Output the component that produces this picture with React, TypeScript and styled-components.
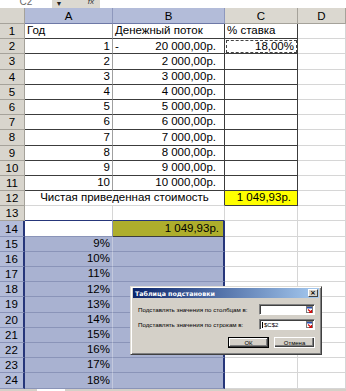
import React from 'react';
import styled, { createGlobalStyle } from 'styled-components';

const GlobalStyle = createGlobalStyle`
  *, *::before, *::after { box-sizing: border-box; }
  html, body { margin: 0; padding: 0; background: #fff; }
  body { font-family: "Liberation Sans", Arial, sans-serif; overflow: hidden; }
`;

const GRID = '#d6d6d6';
const INK = '#3c3c3c';
const SEL_FILL = '#a9b2d1';
const SEL_LINE = '#8a94b8';
const SEL_EDGE = '#26367a';

const Screen = styled.div`
  position: relative;
  width: 346px;
  height: 391px;
  overflow: hidden;
  display: flex;
  flex-direction: column;
  background: #fff;
`;

const FormulaStrip = styled.div`
  height: 8px;
  display: flex;
  overflow: hidden;
  background: #fff;
  font-size: 10px;
  color: #666;
`;

const NameBox = styled.div`
  width: 52px;
  display: flex;
  align-items: flex-end;
  justify-content: center;
  line-height: 13px;
`;

const DropButton = styled.div`
  width: 14px;
  display: flex;
  align-items: flex-end;
  justify-content: center;
  background: #dcd9d1;
  font-size: 7px;
  color: #222;
  padding-bottom: 1px;
`;

const FxArea = styled.div`
  width: 34px;
  display: flex;
  align-items: flex-end;
  justify-content: flex-end;
  padding-right: 6px;
  background: #dcd9d1;
  font-style: italic;
  font-size: 8px;
  line-height: 12px;
  color: #333;
`;

const Sheet = styled.div`
  display: grid;
  grid-template-columns: 25px 88px 112px 73px 1fr;
  grid-template-rows: 16px repeat(24, 15.2px);
  font-size: 11.5px;
  color: #000;
`;

const Corner = styled.div`
  background: #d8d5cd;
  border-right: 1px solid #a5a29a;
  border-bottom: 1px solid #a5a29a;
`;

const ColHead = styled.div<{ $selected?: boolean }>`
  display: flex;
  align-items: center;
  justify-content: center;
  background: ${(p) => (p.$selected ? '#b3bcd9' : '#dbd8d0')};
  border-right: 1px solid ${(p) => (p.$selected ? '#8e98bd' : '#a5a29a')};
  border-bottom: 1px solid ${(p) => (p.$selected ? '#6d78a6' : '#a5a29a')};
`;

const RowHead = styled.div<{ $selected?: boolean }>`
  display: flex;
  align-items: center;
  justify-content: center;
  background: ${(p) => (p.$selected ? '#b3bcd9' : '#d8d5cd')};
  border-right: ${(p) => (p.$selected ? `2px solid ${SEL_EDGE}` : '1px solid #a5a29a')};
  border-bottom: 1px solid ${(p) => (p.$selected ? SEL_LINE : '#a5a29a')};
`;

const Cell = styled.div<{
  $align?: 'left' | 'right' | 'center' | 'split';
  $fill?: string;
  $rb?: string;
  $rw?: number;
  $bb?: string;
  $pr?: number;
  $span?: number;
}>`
  display: flex;
  align-items: center;
  justify-content: ${(p) =>
    p.$align === 'right'
      ? 'flex-end'
      : p.$align === 'center'
        ? 'center'
        : p.$align === 'split'
          ? 'space-between'
          : 'flex-start'};
  padding: 0 ${(p) => p.$pr ?? 2}px 0 2px;
  background: ${(p) => p.$fill ?? '#fff'};
  border-right: ${(p) => p.$rw ?? 1}px solid ${(p) => p.$rb ?? GRID};
  border-bottom: 1px solid ${(p) => p.$bb ?? GRID};
  grid-column: ${(p) => (p.$span ? `span ${p.$span}` : 'auto')};
  white-space: nowrap;
  line-height: 1;
`;

const CopyCell = styled(Cell)`
  outline: 1px dashed #444;
  outline-offset: -2px;
`;

const BottomStrip = styled.div`
  flex: 1;
  display: flex;
  background: #d4d0c8;
`;

const SheetTab = styled.div`
  margin-left: 37px;
  width: 28px;
  background: #fff;
`;

const Dialog = styled.div`
  position: absolute;
  left: 130px;
  top: 286px;
  width: 192px;
  height: 69px;
  display: flex;
  flex-direction: column;
  background: #d4d0c8;
  border: 1px solid;
  border-color: #dedbd4 #404040 #404040 #dedbd4;
  box-shadow: inset 1px 1px #fff, inset -1px -1px #808080;
  padding: 1px 2px 2px 2px;
  font-family: "Liberation Sans", Arial, sans-serif;
`;

const TitleBar = styled.div`
  height: 10px;
  display: flex;
  align-items: center;
  justify-content: space-between;
  padding: 0 1px 0 2px;
  background: linear-gradient(to right, #0a246a, #a6caf0);
  color: #fff;
  font-family: "DejaVu Sans", sans-serif;
  font-weight: bold;
  font-size: 6.3px;
`;

const CloseButton = styled.div`
  width: 10px;
  height: 8px;
  display: flex;
  align-items: center;
  justify-content: center;
  background: #d4d0c8;
  border: 1px solid;
  border-color: #fff #404040 #404040 #fff;
  color: #000;
  font-size: 7px;
  line-height: 1;
`;

const DialogBody = styled.div`
  flex: 1;
  display: flex;
  flex-direction: column;
  padding: 6px 4px 4px 5px;
  font-size: 6.2px;
  color: #000;
`;

const FieldRow = styled.div`
  display: flex;
  align-items: center;
  justify-content: space-between;
  height: 11px;
  margin-bottom: 4px;
`;

const FieldLabel = styled.span`
  white-space: nowrap;
`;

const RefInput = styled.div`
  flex-shrink: 0;
  width: 56px;
  height: 11px;
  display: flex;
  align-items: center;
  justify-content: space-between;
  padding: 0 1px 0 2px;
  background: #fff;
  border: 1px solid;
  border-color: #808080 #fff #fff #808080;
  box-shadow: inset 1px 1px #404040;
  font-size: 6px;
`;

const Caret = styled.span`
  border-left: 1px solid #000;
  padding-left: 1px;
`;

const ButtonRow = styled.div`
  display: flex;
  justify-content: flex-end;
  gap: 5px;
  margin-top: 3px;
`;

const DialogButton = styled.div<{ $default?: boolean }>`
  width: 41px;
  height: 11px;
  display: flex;
  align-items: center;
  justify-content: center;
  background: #d4d0c8;
  border: 1px solid ${(p) => (p.$default ? '#000' : '#fff')};
  box-shadow: ${(p) =>
    p.$default
      ? 'inset -1px -1px #404040, inset 1px 1px #fff, inset -2px -2px #808080'
      : 'inset -1px -1px #404040, inset -2px -2px #808080'};
  font-size: 6px;
`;

const RefIcon = () => (
  <svg width="7" height="7" viewBox="0 0 7 7">
    <rect x="0.5" y="0.5" width="6" height="6" fill="#fff" stroke="#7a7a7a" strokeWidth="1" />
    <rect x="1" y="1" width="5" height="1.5" fill="#2a4fb0" />
    <path d="M2 3.5 L5.5 6.5 M5.5 4 V6.5 H3" stroke="#d01010" strokeWidth="1.2" fill="none" />
  </svg>
);

const rows = [2, 3, 4, 5, 6, 7, 8, 9, 10];
const rates = [9, 10, 11, 12, 13, 14, 15, 16, 17, 18];

export default function App() {
  return (
    <Screen>
      <GlobalStyle />
      <FormulaStrip>
        <NameBox>C2</NameBox>
        <DropButton>▼</DropButton>
        <FxArea>fx</FxArea>
      </FormulaStrip>

      <Sheet>
        <Corner />
        <ColHead $selected>A</ColHead>
        <ColHead $selected>B</ColHead>
        <ColHead>C</ColHead>
        <ColHead>D</ColHead>

        <RowHead>1</RowHead>
        <Cell $rb="#a0a0a0" $bb={INK}>Год</Cell>
        <Cell $rb={INK} $bb={INK}>Денежный поток</Cell>
        <Cell $rb={INK} $bb={INK}>% ставка</Cell>
        <Cell />

        <RowHead>2</RowHead>
        <Cell $align="right" $rb="#a0a0a0" $bb={INK}>1</Cell>
        <Cell $align="split" $rb={INK} $bb={INK} $pr={8}>
          <span>-</span>
          <span>20 000,00р.</span>
        </Cell>
        <CopyCell $align="right" $rb={INK} $bb={INK} $pr={3}>18,00%</CopyCell>
        <Cell />

        {rows.map((n) => (
          <React.Fragment key={n}>
            <RowHead>{n + 1}</RowHead>
            <Cell $align="right" $rb="#a0a0a0" $bb={INK}>{n}</Cell>
            <Cell $align="right" $rb={INK} $bb={INK} $pr={8}>{n} 000,00р.</Cell>
            <Cell $rb={INK} $bb={INK} />
            <Cell />
          </React.Fragment>
        ))}

        <RowHead>12</RowHead>
        <Cell $align="center" $span={2} $rb={INK}>Чистая приведенная стоимость</Cell>
        <Cell $align="right" $fill="#ffff00" $rb={INK} $bb={INK} $pr={6}>1 049,93р.</Cell>
        <Cell />

        <RowHead>13</RowHead>
        <Cell $bb={SEL_EDGE} />
        <Cell $bb={SEL_EDGE} />
        <Cell />
        <Cell />

        <RowHead $selected>14</RowHead>
        <Cell $rb={SEL_LINE} $bb={SEL_LINE} />
        <Cell $align="right" $fill="#aeae2c" $rb={SEL_EDGE} $rw={2} $bb={INK} $pr={4}>
          1 049,93р.
        </Cell>
        <Cell />
        <Cell />

        {rates.map((r, i) => (
          <React.Fragment key={r}>
            <RowHead $selected>{15 + i}</RowHead>
            <Cell $align="right" $fill={SEL_FILL} $rb="#c3c9de" $bb={SEL_LINE}>{r}%</Cell>
            <Cell $fill={SEL_FILL} $rb={SEL_EDGE} $rw={2} $bb={SEL_LINE} />
            <Cell />
            <Cell />
          </React.Fragment>
        ))}
      </Sheet>

      <BottomStrip>
        <SheetTab />
      </BottomStrip>

      <Dialog>
        <TitleBar>
          <span>Таблица подстановки</span>
          <CloseButton>×</CloseButton>
        </TitleBar>
        <DialogBody>
          <FieldRow>
            <FieldLabel>Подставлять значения по столбцам в:</FieldLabel>
            <RefInput>
              <span />
              <RefIcon />
            </RefInput>
          </FieldRow>
          <FieldRow>
            <FieldLabel>Подставлять значения по строкам в:</FieldLabel>
            <RefInput>
              <Caret>$C$2</Caret>
              <RefIcon />
            </RefInput>
          </FieldRow>
          <ButtonRow>
            <DialogButton $default>ОК</DialogButton>
            <DialogButton>Отмена</DialogButton>
          </ButtonRow>
        </DialogBody>
      </Dialog>
    </Screen>
  );
}
